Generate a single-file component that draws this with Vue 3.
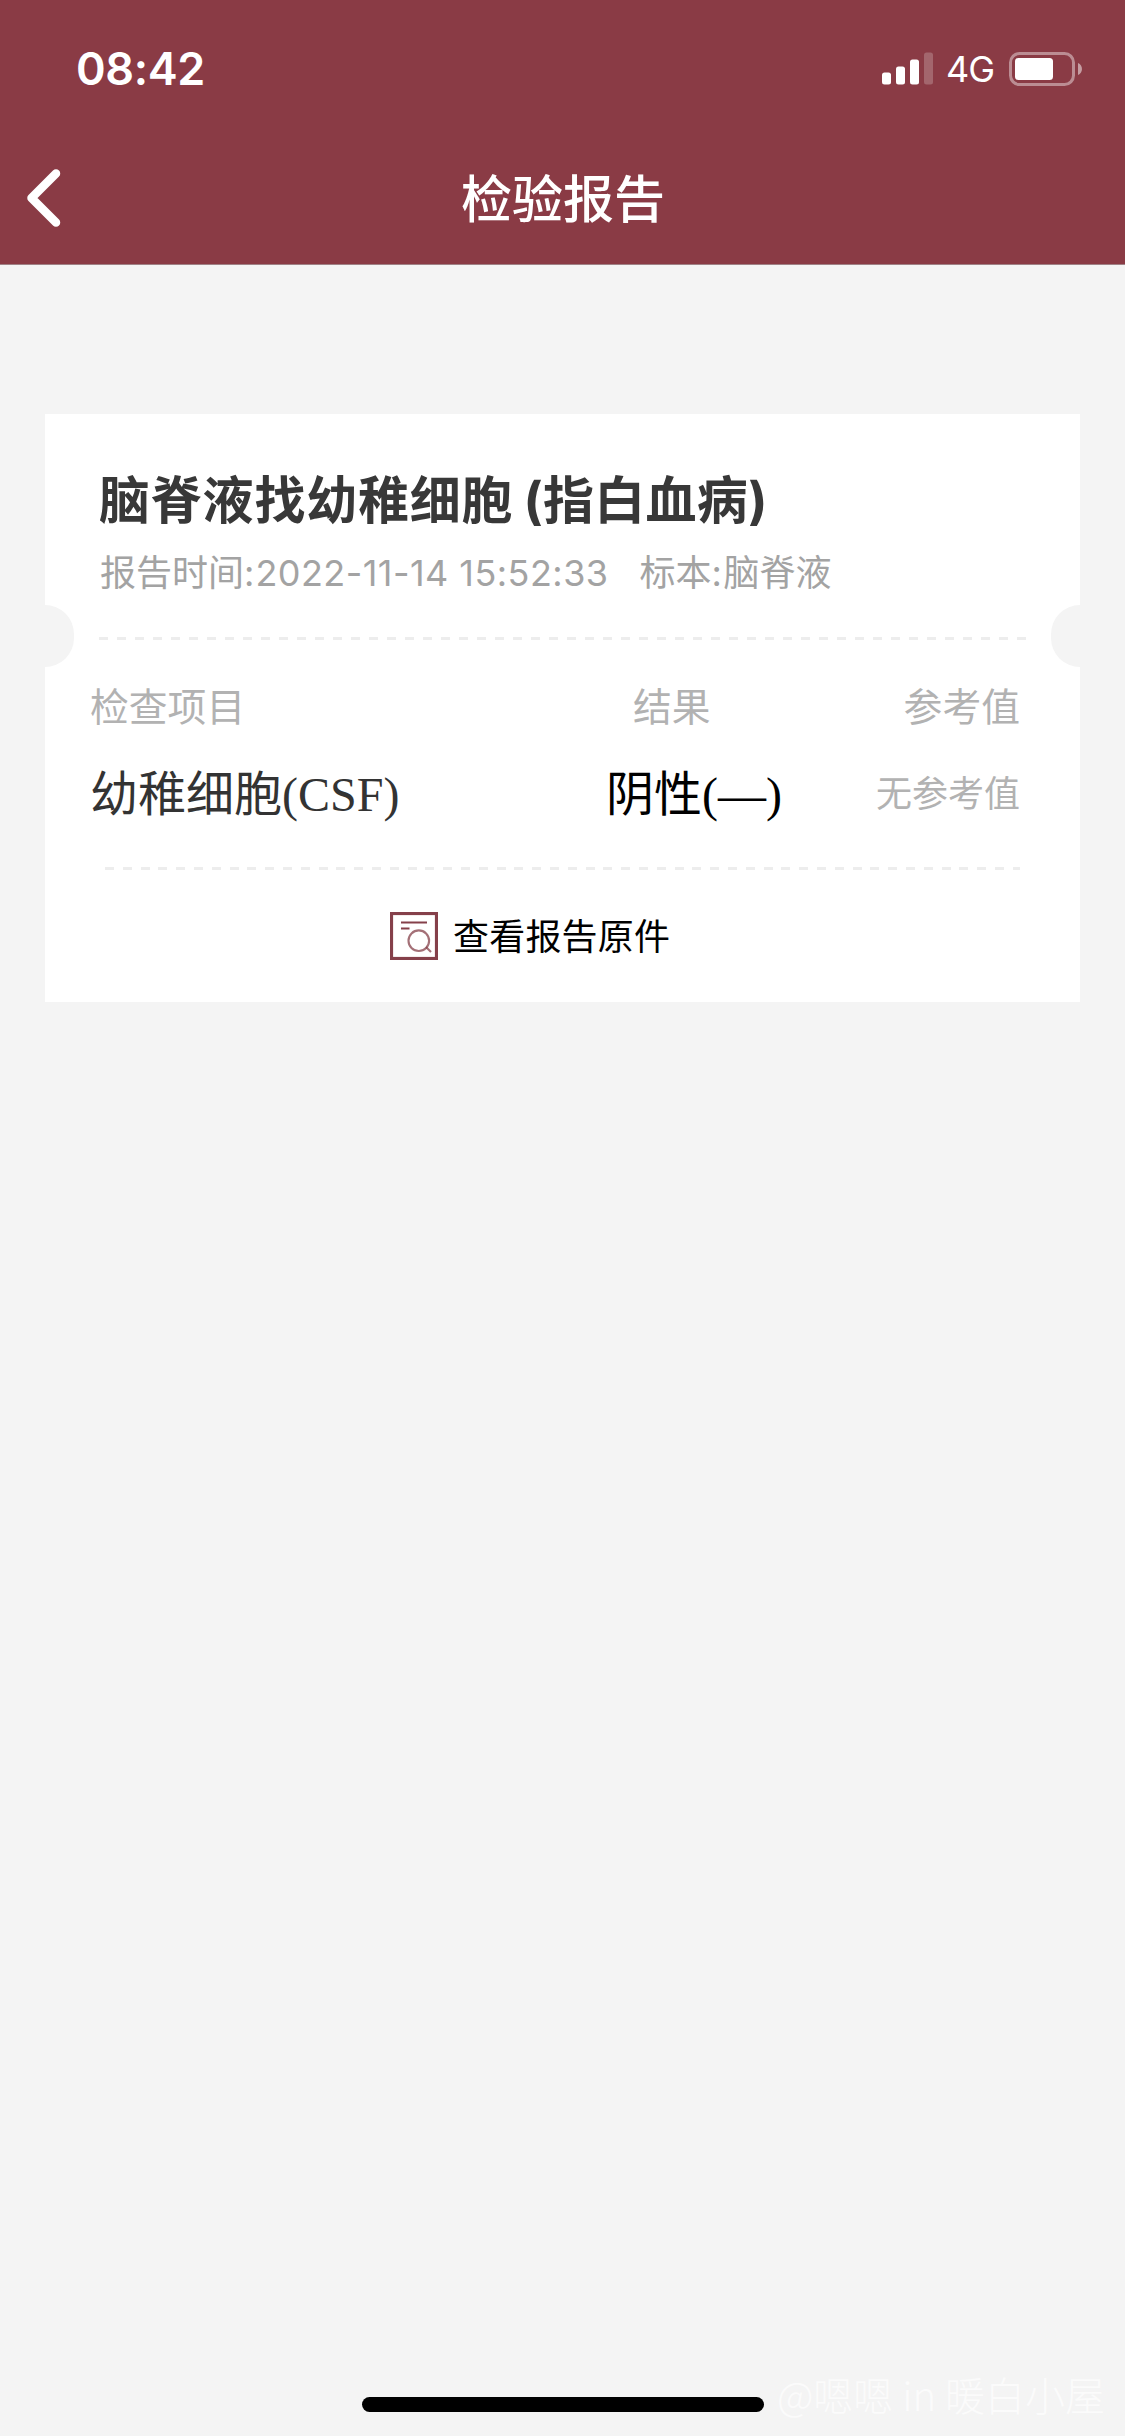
<script setup>
const status = { time: '08:42', network: '4G' }
const report = {
  name: '脑脊液找幼稚细胞',
  note: '(指白血病)',
  time: '2022-11-14 15:52:33',
  sample: '脑脊液',
}
const rows = [{ item: '幼稚细胞', code: '(CSF)', result: '阴性(—)', reference: '无参考值' }]
</script>

<template>
  <div class="screen">
    <header class="header">
      <div class="status">
        <span class="clock">{{ status.time }}</span>
        <div class="indicators">
          <svg class="signal" width="51" height="34" viewBox="0 0 51 34" fill="#fff">
            <rect x="0" y="20.5" width="9" height="12" rx="2.5" />
            <rect x="14" y="14.5" width="9" height="18" rx="2.5" />
            <rect x="28" y="7.5" width="9" height="25" rx="2.5" />
            <rect x="42" y="0.5" width="9" height="32" rx="2.5" opacity=".22" />
          </svg>
          <span class="network">{{ status.network }}</span>
          <svg class="battery" width="74" height="34" viewBox="0 0 74 34">
            <rect x="1.5" y="1.5" width="63" height="31" rx="9" fill="none" stroke="#fff" stroke-width="3" opacity=".42" />
            <rect x="6" y="6" width="38" height="22" rx="3.5" fill="#fff" />
            <path d="M69 11c5.3 2.300 5.300 9.700 0 12z" fill="#fff" opacity=".5" />
          </svg>
        </div>
      </div>
      <nav class="nav">
        <svg class="back" width="34" height="58" viewBox="0 0 34 58" fill="none" stroke="#fff" stroke-width="8.500" stroke-linecap="round" stroke-linejoin="round">
          <path d="M29 4.500L4.500 29L29 53.500" />
        </svg>
        <h1 class="nav-title">检验报告</h1>
      </nav>
    </header>

    <main class="card">
      <section class="summary">
        <h2 class="name"><span>{{ report.name }}</span><span class="note">{{ report.note }}</span></h2>
        <p class="meta">
          <span>报告时间:</span><span class="stamp">{{ report.time }}</span>
          <span class="sample"><span>标本:</span><span class="specimen">{{ report.sample }}</span></span>
        </p>
      </section>
      <div class="tear">
        <i class="notch"></i>
        <i class="dashes"></i>
        <i class="notch"></i>
      </div>
      <section class="table">
        <div class="row head">
          <span>检查项目</span><span class="result">结果</span><span class="reference">参考值</span>
        </div>
        <div v-for="row in rows" :key="row.item" class="row body">
          <span class="item">{{ row.item }}{{ row.code }}</span>
          <span class="result">{{ row.result }}</span>
          <span class="reference">{{ row.reference }}</span>
        </div>
      </section>
      <i class="dashes lower"></i>
      <a class="original">
        <svg width="48" height="48" viewBox="0 0 48 48" fill="none" stroke="#85404a">
          <rect x="1.500" y="1.500" width="45" height="45" stroke-width="3.200" />
          <path d="M11 10.500h26M11 16.500h8.500" stroke-width="2" />
          <circle cx="28.800" cy="28.700" r="10.300" stroke-width="2.100" opacity=".75" />
          <path d="M36 35l5 5" stroke-width="2.100" opacity=".75" />
        </svg>
        <span class="original-label">查看报告原件</span>
      </a>
    </main>

    <div class="home-bar"></div>
    <div class="watermark">@嗯嗯 in 暖白小屋</div>
  </div>
</template>

<style>
body {
  margin: 0;
  background: #f4f4f4;
}
</style>

<style scoped>
.screen {
  position: relative;
  width: 1125px;
  height: 2436px;
  overflow: hidden;
  background: #f4f4f4;
  font-family: Inter, 'Noto Sans CJK SC', sans-serif;
}
.header {
  box-sizing: border-box;
  height: 265px;
  background: #8a3b45;
  border-bottom: 1px solid #a08286;
  color: #fff;
}
.status {
  display: flex;
  justify-content: space-between;
  align-items: center;
  height: 132px;
  padding: 6px 42px 0 76px;
  box-sizing: border-box;
}
.clock {
  font-size: 45px;
  font-weight: 600;
  line-height: 60px;
  letter-spacing: -0.4px;
}
.indicators {
  display: flex;
  align-items: center;
}
.network {
  width: 63px;
  margin-left: 13px;
  font-size: 36px;
  line-height: 40px;
  letter-spacing: -1px;
}
.nav {
  display: flex;
  align-items: center;
  height: 132px;
  padding: 0 28px 0 27px;
}
.back {
  margin-top: -1px;
}
.nav-title {
  flex: 1;
  margin: 3px 32px 0 0;
  text-align: center;
  font-size: 51px;
  font-weight: 500;
  line-height: 72px;
}
.card {
  display: flex;
  flex-direction: column;
  height: 588px;
  margin: 149px 45px 0;
  background: #fff;
}
.summary {
  height: 191px;
  padding-left: 54px;
}
.name {
  display: flex;
  margin: 51px 0 0;
  color: #383838;
  font-size: 51px;
  font-weight: 700;
  line-height: 72px;
  letter-spacing: 0.8px;
}
.note {
  margin-left: 10px;
  letter-spacing: 0.3px;
}
.meta {
  display: flex;
  margin: 11px 0 0;
  padding-left: 1px;
  color: #a3a3a3;
  font-size: 36px;
  line-height: 50px;
}
.stamp {
  margin-left: 1px;
  letter-spacing: 0.45px;
}
.sample {
  display: flex;
  margin-left: 31px;
}
.specimen {
  margin-left: 1.5px;
}
.tear {
  display: flex;
  align-items: center;
  height: 62px;
}
.notch {
  flex: none;
  width: 29px;
  height: 62px;
  border-radius: 0 31px 31px 0;
  background: #f4f4f4;
}
.notch:last-child {
  border-radius: 31px 0 0 31px;
}
.dashes {
  flex: 1;
  height: 3px;
  margin: 4px 22px 0 25px;
  background: repeating-linear-gradient(90deg, #ededed 0 9px, transparent 9px 18px);
}
.table {
  height: 200px;
  padding: 0 60px 0 45px;
}
.row {
  display: grid;
  grid-template-columns: 460px 240px 1fr;
  align-items: center;
}
.head {
  height: 74px;
  color: #b2b2b2;
  font-size: 38.8px;
}
.body {
  height: 98px;
  color: #333;
  font-family: 'Liberation Serif', 'Noto Sans CJK SC', serif;
  font-size: 48px;
}
.result {
  padding-left: 83px;
}
.body .result {
  padding-left: 56px;
  color: #000;
  white-space: nowrap;
}
.reference {
  text-align: right;
}
.body .reference {
  margin-top: 2px;
  color: #b2b2b2;
  font-size: 36px;
}
.lower {
  flex: none;
  margin: 0 60px 0 60px;
  background: repeating-linear-gradient(90deg, #ededed 0 9px, transparent 9px 17.8px);
}
.original {
  display: flex;
  align-items: center;
  gap: 15px;
  margin: 42px 0 0 345px;
  color: #000;
  font-size: 36px;
  line-height: 48px;
}
.original-label {
  padding-top: 2px;
  line-height: 46px;
  letter-spacing: 0.2px;
}
.home-bar {
  position: absolute;
  left: 362px;
  bottom: 24px;
  width: 402px;
  height: 15px;
  border-radius: 8px;
  background: #000;
}
.watermark {
  position: absolute;
  right: 20px;
  bottom: 14px;
  color: #fbfbfb;
  font-family: 'Noto Sans CJK SC', sans-serif;
  font-size: 40px;
  font-weight: 300;
  line-height: 56px;
  white-space: nowrap;
}
</style>
